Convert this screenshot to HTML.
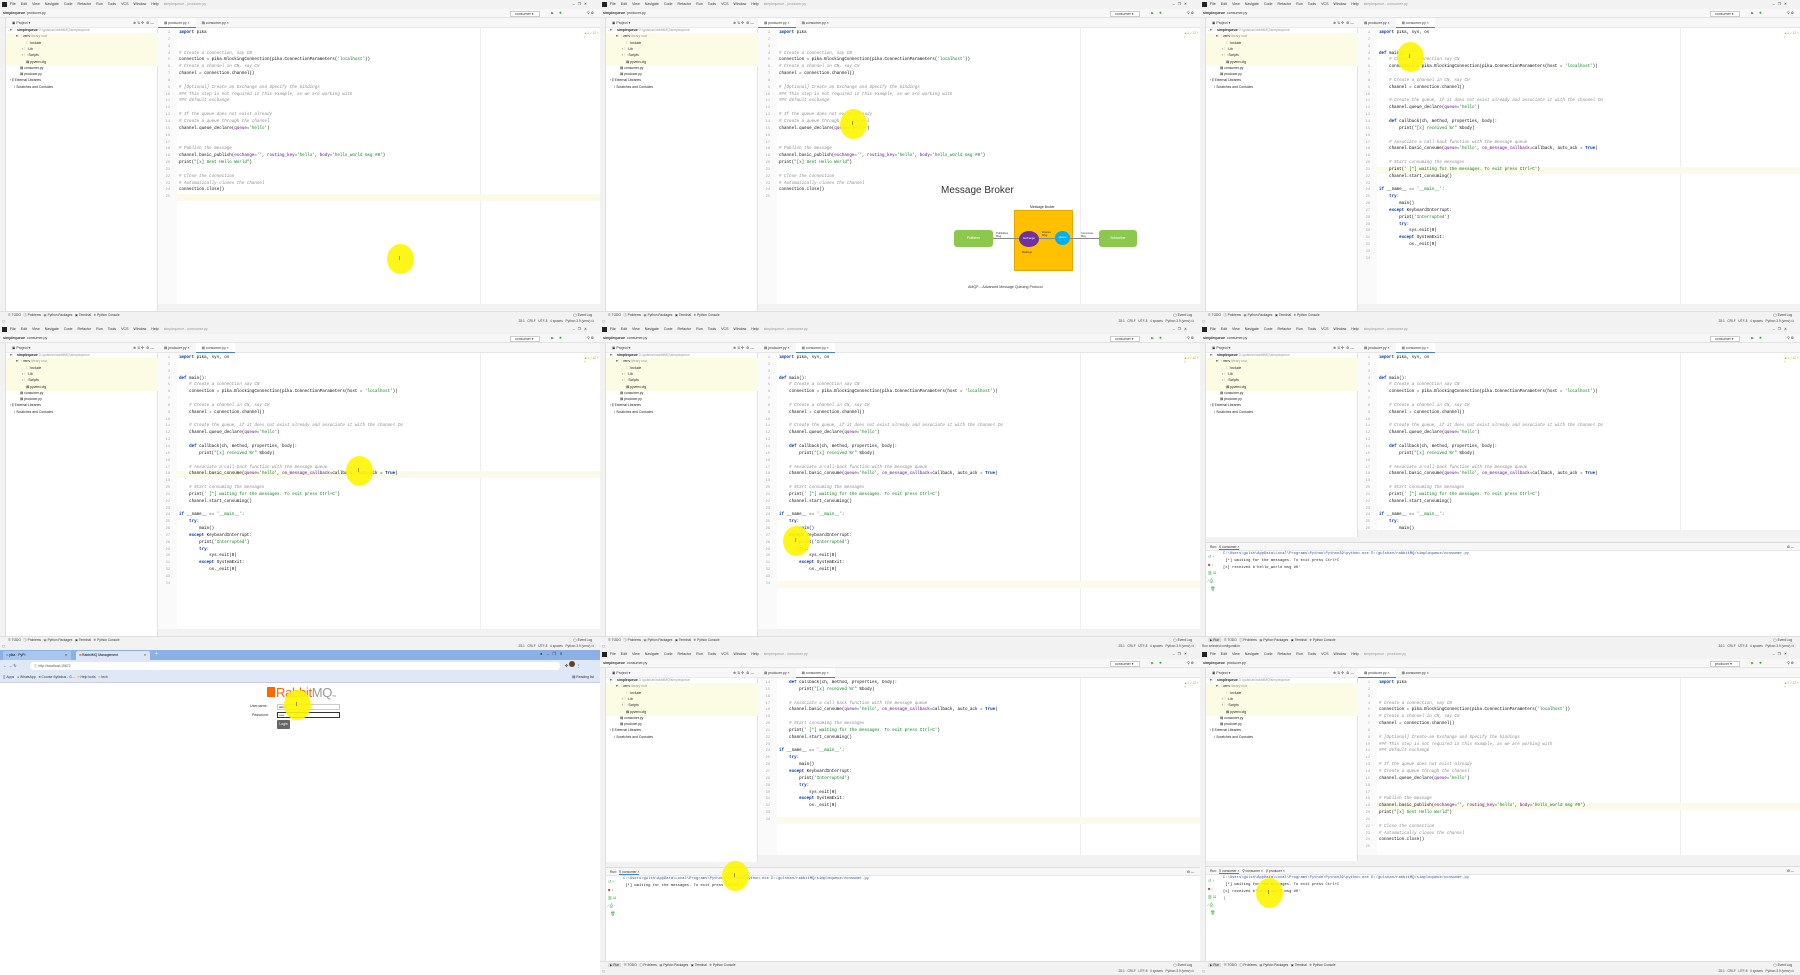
<!DOCTYPE html>
<html><head><meta charset="utf-8">
<style>
*{margin:0;padding:0;box-sizing:border-box}
body{width:1800px;height:975px;overflow:hidden;background:#fff;font-family:"Liberation Sans",sans-serif;position:relative}
.tile{position:absolute;width:600px;height:325px;overflow:hidden;background:#fff}
.abs{position:absolute}
.menu{left:0;top:0;width:600px;height:9px;background:#f2f2f2;font-size:3.6px;color:#333;line-height:9px;padding-left:10px;white-space:nowrap}
.menu span{margin-right:5px}
.tb{left:0;top:9px;width:600px;height:9px;background:#f7f7f7;border-bottom:1px solid #e4e4e4;font-size:3.6px;line-height:8px;padding-left:3px;color:#333;white-space:nowrap}
.strip{left:0;top:18px;width:6px;height:293px;background:#f2f2f2;border-right:1px solid #e0e0e0}
.panel{left:6px;top:18px;width:152px;height:293px;background:#fff;border-right:1px solid #e3e3e3}
.phead{left:6px;top:18px;width:152px;height:10px;background:#f7f7f7;border-bottom:1px solid #eaeaea;font-size:3.6px;line-height:10px;padding-left:6px;color:#333}
.tree{font-size:3.4px;color:#222;white-space:nowrap;line-height:6.3px}
.tabs{left:158px;top:18px;width:442px;height:10px;background:#f7f7f7;border-bottom:1px solid #e6e6e6;font-size:3.5px;line-height:10px;color:#333;white-space:nowrap}
.tabs span{display:inline-block;padding:0 6px;height:10px}
.tabs .act{border-bottom:1.5px solid #4083c9;background:#fff}
.gutter{left:158px;top:28px;width:19px;background:#fafafa}
.code{font-family:"Liberation Mono",monospace;font-size:4.2px;line-height:6.85px;white-space:pre;color:#080808}
.ln{font-family:"Liberation Mono",monospace;font-size:3.6px;line-height:6.85px;color:#aaa;text-align:right;width:12px;white-space:pre}
.kw{color:#0033b3;font-weight:bold}
.st{color:#067d17}
.cm{color:#8c8c8c;font-style:italic}
.kg{color:#660099}
.bbar{left:0;top:311px;width:600px;height:7px;background:#f2f2f2;border-top:1px solid #e0e0e0;font-size:3.2px;line-height:6px;color:#333;white-space:nowrap;padding-left:8px}
.sbar{left:0;top:318px;width:600px;height:7px;background:#f2f2f2;font-size:3.2px;line-height:7px;color:#444;text-align:right;padding-right:6px}
.below{left:158px;background:#f2f2f2;width:442px}
.dot{position:absolute;width:27px;height:30px;border-radius:50%;background:rgba(255,245,0,.9);margin-left:-13px;margin-top:-15px}
.run{left:6px;width:594px;background:#fff;border-top:1px solid #ddd}
.rhead{height:8px;background:#f7f7f7;border-bottom:1px solid #e6e6e6;font-size:3.3px;line-height:8px;padding-left:4px;color:#333}
.con{font-family:"Liberation Mono",monospace;font-size:3.8px;line-height:7px;white-space:pre;color:#222;left:23px}
</style></head><body>
<div id="root"></div>
<script>
var producer=[
"import pika","","",
"# Create a connection, say CN",
"connection = pika.BlockingConnection(pika.ConnectionParameters('localhost'))",
"# Create a channel in CN, say CH",
"channel = connection.channel()","",
"# [Optional] Create an Exchange and Specify the bindings",
"### This step is not required in this example, as we are working with",
"### default exchange","",
"# If the queue does not exist already",
"# Create a queue through the channel",
"channel.queue_declare(queue='hello')","","",
"# Publish the message",
"channel.basic_publish(exchange='', routing_key='hello', body='hello_world msg #0')",
"print(\"[x] Sent Hello World\")","",
"# Close the connection",
"# Automatically closes the channel",
"connection.close()",""];
var consumer=[
"import pika, sys, os","","",
"def main():",
"    # Create a connection say CN",
"    connection = pika.BlockingConnection(pika.ConnectionParameters(host = 'localhost'))","",
"    # Create a channel in CN, say CH",
"    channel = connection.channel()","",
"    # Create the queue, if it does not exist already and associate it with the channel CH",
"    channel.queue_declare(queue='hello')","",
"    def callback(ch, method, properties, body):",
"        print(\"[x] received %r\" %body)","",
"    # Associate a call-back function with the message queue",
"    channel.basic_consume(queue='hello', on_message_callback=callback, auto_ack = True)","",
"    # Start consuming the messages",
"    print(' [*] waiting for the messages. To exit press Ctrl+C')",
"    channel.start_consuming()","",
"if __name__ == '__main__':",
"    try:",
"        main()",
"    except KeyboardInterrupt:",
"        print('Interrupted')",
"        try:",
"            sys.exit(0)",
"        except SystemExit:",
"            os._exit(0)","",""];
function esc(s){return s.replace(/&/g,'&amp;').replace(/</g,'&lt;')}
function hl(l){
  var t=l.trim();
  if(t[0]=='#'){return esc(l.slice(0,l.indexOf('#')))+'<span class="cm">'+esc(l.slice(l.indexOf('#')))+'</span>';}
  var out='',re=/('[^']*'|"[^"]*")|\b(import|def|try|except|if|True)\b|\b(queue|exchange|routing_key|body|host|on_message_callback|auto_ack)(?==)/g,last=0,m;
  while((m=re.exec(l))){out+=esc(l.slice(last,m.index));
    if(m[1])out+='<span class="st">'+esc(m[1])+'</span>';else if(m[2])out+='<span class="kw">'+m[2]+'</span>';else out+='<span class="kg">'+m[3]+'</span>';
    last=re.lastIndex;}
  return out+esc(l.slice(last));
}
function ide(o){
  var h='';
  h+='<div class="abs menu"><span style="position:absolute;left:2px;top:2px;width:5px;height:5px;background:#222"></span><span>File</span><span>Edit</span><span>View</span><span>Navigate</span><span>Code</span><span>Refactor</span><span>Run</span><span>Tools</span><span>VCS</span><span>Window</span><span>Help</span><span style="color:#999">simplequeue - '+o.file+'</span><span style="position:absolute;right:8px">–&nbsp;&nbsp;&nbsp;❐&nbsp;&nbsp;&nbsp;✕</span></div>';
  h+='<div class="abs tb"><b>simplequeue</b> &nbsp;'+o.file+'<span style="position:absolute;right:60px;top:1.5px;height:6px;width:30px;border:1px solid #ccc;background:#fff;line-height:5px;padding-left:4px">'+(o.cfg||'consumer')+' ▾</span><span style="position:absolute;right:46px;color:#3a3">▶</span><span style="position:absolute;right:38px;color:#3a3">✹</span><span style="position:absolute;right:6px">⚲ ⚙</span></div>';
  h+='<div class="abs strip"></div><div class="abs panel"></div>';
  h+='<div class="abs phead">▣ Project ▾<span style="position:absolute;right:4px">⊕ ⇅ ✣ &nbsp;⚙ —</span></div>';
  h+='<div class="abs" style="left:6px;top:33px;width:152px;height:33px;background:#fcfbe3"></div>';
  var tr=[[2,'▾ 🗀 <b>simplequeue</b> <span style="color:#999">D:\\gulshan\\rabbitMQ\\simplequeue</span>'],[8,'▾ 🗀 venv <span style="color:#999">library root</span>'],[18,'🗀 Include'],[14,'› 🗀 Lib'],[14,'› 🗀 Scripts'],[18,'▤ pyvenv.cfg'],[12,'▤ consumer.py'],[12,'▤ producer.py'],[2,'› ⫼ External Libraries'],[6,'⟟ Scratches and Consoles']];
  tr.forEach(function(r,i){h+='<div class="abs tree" style="left:'+(8+r[0])+'px;top:'+(27+i*6.3)+'px">'+r[1]+'</div>';});
  h+='<div class="abs tabs"><span'+(o.file=='producer.py'?' class="act"':'')+'>▤ producer.py ×</span><span'+(o.file=='consumer.py'?' class="act"':'')+'>▤ consumer.py ×</span></div>';
  var eb=o.editEnd||304;
  h+='<div class="abs gutter" style="height:'+(eb-28)+'px"></div>';
  h+='<div class="abs" style="left:480px;top:28px;width:1px;height:'+(eb-28)+'px;background:#eee"></div>';
  var start=o.start||0,lines=o.code;
  if(o.cur!=null){h+='<div class="abs" style="left:177px;top:'+(30+(o.cur-1-start)*6.85)+'px;width:423px;height:6.85px;background:#fcfae8"></div>';}
  var ln='',cd='';
  for(var i=start;i<lines.length;i++){ln+=(i+1)+'\n';cd+=hl(lines[i])+'\n';}
  h+='<div class="abs" style="left:158px;top:30px;height:'+(eb-30)+'px;overflow:hidden"><div class="ln">'+ln+'</div></div>';
  h+='<div class="abs code" style="left:179px;top:30px;height:'+(eb-30)+'px;overflow:hidden">'+cd+'</div>';
  h+='<div class="abs" style="left:584px;top:31px;font-size:3.2px;color:#c9a000">▲1 ✓12 ˄ ˅</div>';
  h+='<div class="abs below" style="top:'+eb+'px;height:'+(311-eb)+'px"></div>';
  if(o.run){
    var rt=o.run;
    h+='<div class="abs" style="left:6px;top:'+(rt-5)+'px;width:594px;height:5px;background:#f2f2f2"></div>';
    h+='<div class="abs run" style="top:'+rt+'px;height:'+(311-rt)+'px"><div class="rhead">Run: &nbsp;<span style="border-bottom:1px solid #4083c9">⚲ consumer ×</span>'+(o.runTabs||'')+'<span style="position:absolute;right:6px">⚙ —</span></div></div>';
    h+='<div class="abs" style="left:8px;top:'+(rt+11)+'px;font-size:4px;line-height:8px;color:#3a3;width:14px;white-space:pre">↺ ↑\n<span style="color:#d33">■</span> ↓\n▥ ⇊\n⁄ ⎙\n  🗑</div>';
    h+='<div class="abs con" style="top:'+(rt+9)+'px"><span style="color:#2a4ea8">C:\\Users\\gulsh\\AppData\\Local\\Programs\\Python\\Python39\\python.exe D:/gulshan/rabbitMQ/simplequeue/consumer.py</span>\n [*] waiting for the messages. To exit press Ctrl+C\n'+(o.runOut||'')+'</div>';
  }
  h+='<div class="abs bbar">'+(o.run?'<span style="background:#dcdcdc;padding:0 2px">▶ Run</span> &nbsp; ':'')+'☰ TODO &nbsp; ⓘ Problems &nbsp; ▤ Python Packages &nbsp; ▣ Terminal &nbsp; ✣ Python Console<span style="position:absolute;right:8px">◯ Event Log</span></div>';
  h+='<div class="abs sbar"><span style="position:absolute;left:2px">'+(o.status||'▢')+'</span>'+(o.pos||'25:1')+' &nbsp; CRLF &nbsp; UTF-8 &nbsp; 4 spaces &nbsp; Python 3.9 (venv) ⛁</div>';
  return h;
}
function browser(){
  var h='';
  h+='<div class="abs" style="left:0;top:0;width:600px;height:10px;background:#8ab0e6"></div>';
  h+='<div class="abs" style="left:3px;top:1px;width:68px;height:9px;background:#a9c6ef;border-radius:2px 2px 0 0;font-size:3.4px;line-height:9px;padding-left:3px">○ pika · PyPI <span style="float:right;margin-right:4px">×</span></div>';
  h+='<div class="abs" style="left:76px;top:1px;width:74px;height:9px;background:#dbe6f7;border-radius:2px 2px 0 0;font-size:3.4px;line-height:9px;padding-left:3px"><span style="color:#f60">■</span> RabbitMQ Management<span style="float:right;margin-right:4px">×</span></div>';
  h+='<div class="abs" style="left:155px;top:1px;font-size:5px;color:#fff">+</div>';
  h+='<div class="abs" style="left:540px;top:1px;font-size:4px;color:#333">●&nbsp;&nbsp;&nbsp; –&nbsp;&nbsp; ❐&nbsp;&nbsp; ✕</div>';
  h+='<div class="abs" style="left:0;top:10px;width:600px;height:12px;background:#dfe8f7;font-size:4px;line-height:12px;padding-left:3px;color:#444">← → ↻</div>';
  h+='<div class="abs" style="left:30px;top:12px;width:530px;height:8px;background:#fff;border-radius:4px;font-size:3.4px;line-height:8px;padding-left:4px;color:#555">ⓘ http://localhost:15672</div>';
  h+='<div class="abs" style="left:565px;top:11px;font-size:4px">✣ <span style="display:inline-block;width:6px;height:6px;border-radius:50%;background:#6b3d1c"></span> ⋮</div>';
  h+='<div class="abs" style="left:0;top:22px;width:600px;height:11px;background:#dfe8f7;border-bottom:1px solid #ccd;font-size:3.4px;line-height:11px;padding-left:3px;color:#333;white-space:nowrap">⣿ Apps &nbsp; <span style="color:#2a2">●</span> WhatsApp &nbsp; <span style="color:#2a2">■</span> Course Syllabus - G... &nbsp; <span style="color:#e6c24a">■</span> Help tools &nbsp; <span style="color:#e6c24a">■</span> tech<span style="position:absolute;right:6px">▤ Reading list</span></div>';
  h+='<div class="abs" style="left:267px;top:36px;font-size:13px;line-height:14px;color:#f60;white-space:nowrap;letter-spacing:-.3px"><span style="display:inline-block;width:8px;height:10px;background:#f60;margin-right:1px"></span>Rabbit<span style="color:#999">MQ</span><span style="font-size:3px;color:#999">TM</span></div>';
  h+='<div class="abs" style="left:250px;top:54px;font-size:3.6px;color:#333">Username:</div>';
  h+='<div class="abs" style="left:277px;top:54px;width:63px;height:6px;border:1px solid #ccc;font-size:3px;line-height:5px;padding-left:1px">admin</div>';
  h+='<div class="abs" style="left:252px;top:63px;font-size:3.6px;color:#333">Password:</div>';
  h+='<div class="abs" style="left:277px;top:62px;width:63px;height:6px;border:1px solid #333;font-size:3px;line-height:5px;padding-left:1px">•••••</div>';
  h+='<div class="abs" style="left:277px;top:70px;width:13px;height:9px;background:#666;border-radius:1px;color:#fff;font-size:3.4px;line-height:9px;text-align:center">Login</div>';
  return h;
}
function broker(){
  var h='<div class="abs" style="left:341px;top:185px;font-size:10px;color:#333;white-space:nowrap">Message Broker</div>';
  h+='<div class="abs" style="left:414px;top:210px;width:59px;height:61px;background:#ffc000;border:1px solid #e5a800"></div>';
  h+='<div class="abs" style="left:430px;top:205px;font-size:3.4px;color:#222">Message Broker</div>';
  h+='<div class="abs" style="left:354px;top:230px;width:39px;height:17px;background:#8cc84b;border-radius:3px;font-size:3.2px;color:#fff;text-align:center;line-height:17px">Publisher</div>';
  h+='<div class="abs" style="left:499px;top:230px;width:38px;height:17px;background:#8cc84b;border-radius:3px;font-size:3.2px;color:#fff;text-align:center;line-height:17px">Subscriber</div>';
  h+='<div class="abs" style="left:419px;top:231px;width:20px;height:16px;background:#7030a0;border-radius:50%;font-size:2.6px;color:#fff;text-align:center;line-height:16px">Exchange</div>';
  h+='<div class="abs" style="left:455px;top:231px;width:15px;height:14px;background:#00b0f0;border-radius:50%;font-size:2.6px;color:#fff;text-align:center;line-height:14px">Queue</div>';
  h+='<div class="abs" style="left:393px;top:238px;width:26px;height:1px;background:#888"></div>';
  h+='<div class="abs" style="left:439px;top:238px;width:16px;height:1px;background:#888"></div>';
  h+='<div class="abs" style="left:470px;top:238px;width:29px;height:1px;background:#888"></div>';
  h+='<div class="abs" style="left:396px;top:232px;font-size:2.8px;line-height:3px;color:#333">Publishes<br>Msg</div>';
  h+='<div class="abs" style="left:442px;top:231px;font-size:2.8px;line-height:3px;color:#333">Routes<br>Msg</div>';
  h+='<div class="abs" style="left:481px;top:232px;font-size:2.6px;line-height:3px;color:#333">Consumes<br>Msg</div>';
  h+='<div class="abs" style="left:422px;top:251px;font-size:2.6px;color:#333">Bindings</div>';
  h+='<div class="abs" style="left:368px;top:285px;font-size:3.6px;color:#333;white-space:nowrap">AMQP – Advanced Message Queuing Protocol</div>';
  return h;
}
var tiles=[
 [0,0,ide({file:'producer.py',code:producer,cur:25}),[400,259]],
 [600,0,ide({file:'producer.py',code:producer,cur:null})+broker(),[253,124]],
 [1200,0,ide({file:'consumer.py',code:consumer,cur:21}),[210,57]],
 [0,325,ide({file:'consumer.py',code:consumer,cur:18}),[359,146]],
 [600,325,ide({file:'consumer.py',code:consumer,cur:34}),[196,216]],
 [1200,325,ide({file:'consumer.py',code:consumer,cur:null,editEnd:205,run:217,runOut:"[x] received b'hello_world msg #0'",status:'Run selected configuration',pos:'34:1'}),[542,-22]],
 [0,650,browser(),[297,55]],
 [600,650,ide({file:'consumer.py',code:consumer,start:13,cur:34,editEnd:205,run:217}),[135,226]],
 [1200,650,ide({file:'producer.py',code:producer,cur:19,cfg:'producer',editEnd:205,run:216,runTabs:' &nbsp; ⚲ consumer × &nbsp; ⚲ producer ×',runOut:"[x] received b'hello_world msg #0'\n|"}),[69,243]]
];
var H='';
tiles.forEach(function(t){H+='<div class="tile" style="left:'+t[0]+'px;top:'+t[1]+'px">'+t[2]+'<div class="dot" style="left:'+t[3][0]+'px;top:'+t[3][1]+'px"></div><div class="abs" style="left:'+(t[3][0]-1)+'px;top:'+(t[3][1]-3)+'px;font-size:5px;color:#333">I</div></div>';});
document.getElementById('root').innerHTML=H;
</script>
</body></html>
